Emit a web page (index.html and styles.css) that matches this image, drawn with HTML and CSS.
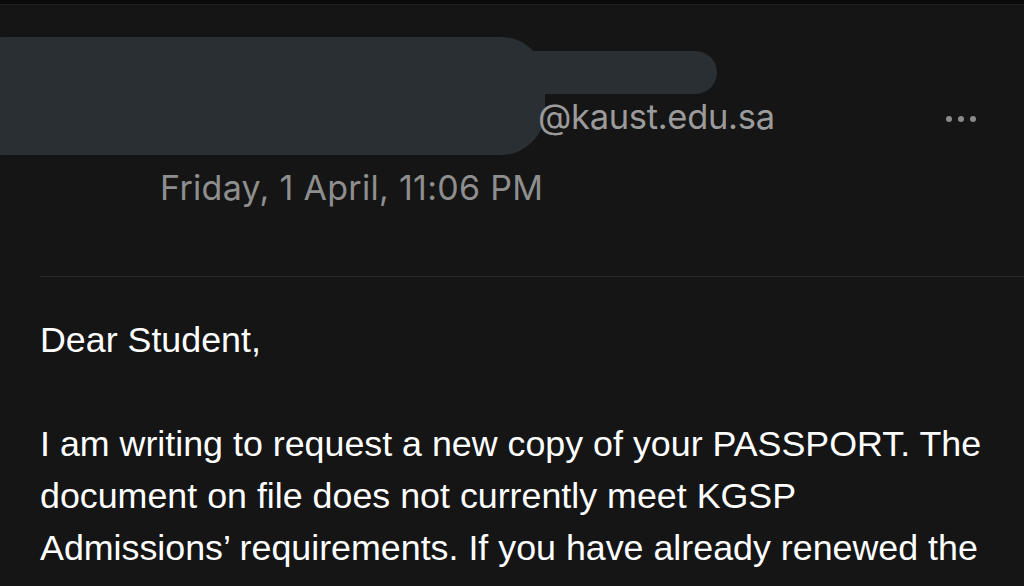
FILE: index.html
```html
<!DOCTYPE html>
<html lang="en">
<head>
<meta charset="utf-8">
<title>Message</title>
<link rel="stylesheet" href="styles.css">
</head>
<body>
<div class="topbar"></div>
<main class="message">
  <header class="msg-header">
    <div class="redaction" aria-hidden="true">
      <span class="redaction-main"></span>
      <span class="redaction-tail"></span>
    </div>
    <div class="from-row">
      <span class="sender-name">Sender</span>
      <span class="sender-email">@kaust.edu.sa</span>
      <button class="more" aria-label="More"><i></i><i></i><i></i></button>
    </div>
    <div class="date">Friday, 1 April, 11:06 PM</div>
  </header>
  <hr class="divider">
  <section class="msg-body">
    <p>Dear Student,</p>
    <p>I am writing to request a new copy of your PASSPORT. The document on file does not currently meet KGSP Admissions’ requirements. If you have already renewed the</p>
  </section>
</main>
</body>
</html>
```
FILE: styles.css
```css
html, body {
  margin: 0;
  padding: 0;
  background: #151515;
  height: 100%;
  overflow: hidden;
}

.topbar {
  height: 4px;
  background: #0a0a0a;
  border-bottom: 1px solid #1d1d1d;
}

.message {
  position: relative;
}

.msg-header {
  position: relative;
  padding: 90px 0 0 0;
}

.redaction {
  position: absolute;
  left: 0;
  top: 32px;
  width: 717px;
  height: 118px;
  pointer-events: none;
}

.redaction-main {
  position: absolute;
  left: -40px;
  top: 0;
  width: 585px;
  height: 118px;
  background: #2a2f33;
  border-radius: 44px;
}

.redaction-tail {
  position: absolute;
  left: 480px;
  top: 14px;
  width: 237px;
  height: 43px;
  background: #2a2f33;
  border-radius: 22px;
}

.from-row {
  display: flex;
  align-items: center;
  padding: 0 48px 0 40px;
  height: 44px;
}

.sender-name {
  width: 498px;
  flex: 0 0 auto;
  visibility: hidden;
}

.sender-email {
  position: relative;
  font-family: Inter, "Noto Sans", sans-serif;
  font-size: 34.5px;
  line-height: 44px;
  color: #9b9b9b;
  letter-spacing: -0.3px;
}

.more {
  margin-left: auto;
  margin-top: 4px;
  display: flex;
  gap: 6px;
  background: none;
  border: 0;
  padding: 0;
  cursor: pointer;
}

.more i {
  display: block;
  width: 6px;
  height: 6px;
  border-radius: 50%;
  background: #8a8a8a;
}

.date {
  margin-top: 27px;
  padding-left: 160px;
  font-family: Inter, "Noto Sans", sans-serif;
  font-size: 34px;
  line-height: 44px;
  color: #8e8e8e;
  letter-spacing: 0.3px;
}

.divider {
  margin: 66px 0 0 40px;
  border: 0;
  border-top: 1px solid #2b2b2b;
  height: 0;
}

.msg-body {
  padding: 37px 40px 0 40px;
  font-family: "Liberation Sans", Arial, sans-serif;
  font-size: 35.8px;
  line-height: 52px;
  color: #ffffff;
}

.msg-body p {
  margin: 0 0 52px 0;
}
```
